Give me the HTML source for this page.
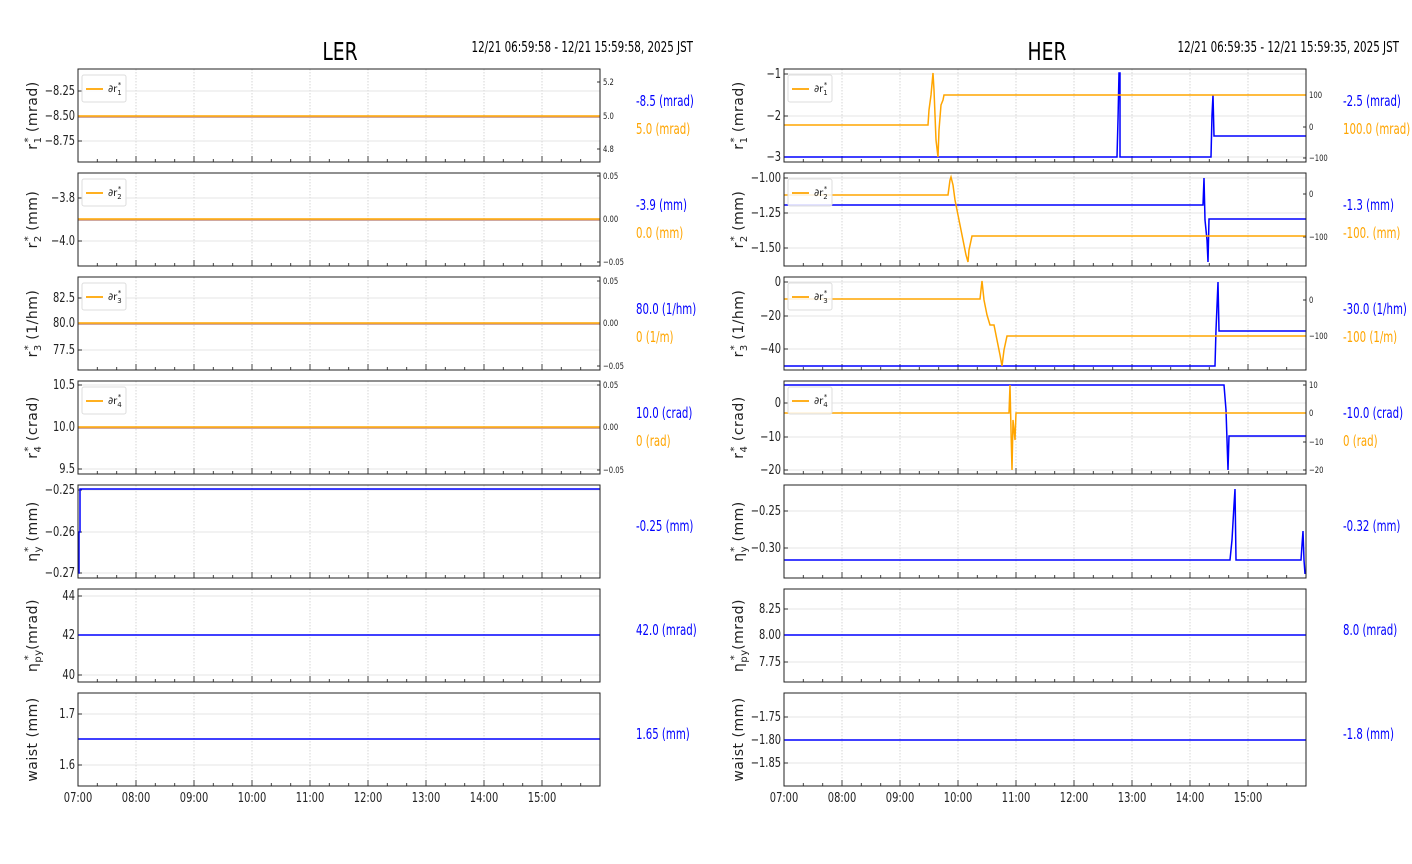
<!DOCTYPE html>
<html><head><meta charset="utf-8">
<style>
html,body{margin:0;padding:0;background:#fff;}
svg{display:block;font-family:"DejaVu Sans","Liberation Sans",sans-serif;}
</style></head><body>
<svg id="s" width="1412" height="864" xmlns="http://www.w3.org/2000/svg"></svg>
<script>
var s=document.getElementById('s'),o='';
function L(x1,y1,x2,y2,c,w,d){o+='<line x1="'+x1+'" y1="'+y1+'" x2="'+x2+'" y2="'+y2+'" stroke="'+c+'" stroke-width="'+w+'"'+(d?' stroke-dasharray="'+d+'"':'')+'/>';}
function T(x,y,t,sz,c,a,sx){sx=sx||0.76;o+='<text transform="translate('+x+','+y+') scale('+sx+',1)" font-size="'+sz+'" fill="'+(c||'#000')+'" text-anchor="'+(a||'start')+'">'+t+'</text>';}
function P(pts,c,w){o+='<polyline fill="none" stroke="'+c+'" stroke-width="'+(w||1.5)+'" points="'+pts+'"/>';}
var tops=[69,173,277,381,485,589,693],H=93,W=522;
function panel(x0,y0,yt,rt,legend,lines,ylab){
  for(var k=1;k<9;k++){var x=x0+58*k;L(x,y0,x,y0+H,'#ccc',0.8,'1.5,1.5');}
  yt.forEach(function(t){L(x0,t[0],x0+W,t[0],'#ddd',0.8);L(x0,t[0],x0+4,t[0],'#333',1);T(x0-3,t[0]+4,t[1],13,'#222','end');});
  if(rt){rt.forEach(function(t){L(x0+W-3,t[0],x0+W,t[0],'#333',1);T(x0+W+3,t[0]+3,t[1],9,'#222','start');});}
  for(var k=0;k<=27;k++){var x=x0+58*k/3;var big=k%3==0;L(x,y0+H,x,y0+H-(big?6:3),'#444',1);}
  lines.forEach(function(l){P(l[0],l[1],l[2]);});
  if(legend){o+='<rect x="'+(x0+4)+'" y="'+(y0+6)+'" width="44" height="27" rx="2" fill="#fff" fill-opacity="0.85" stroke="#ddd"/>';L(x0+8,y0+20,x0+25,y0+20,'orange',1.8);o+='<text x="'+(x0+30)+'" y="'+(y0+23)+'" font-size="10" fill="#222">∂r<tspan font-size="7" dy="3">'+legend+'</tspan><tspan font-size="7" dy="-8" dx="-4">*</tspan></text>';}
  o+='<rect x="'+x0+'" y="'+y0+'" width="'+W+'" height="'+H+'" fill="none" stroke="#222" stroke-width="1"/>';
  o+='<text transform="translate('+(x0-41)+','+(y0+H/2)+') rotate(-90)" font-size="14" letter-spacing="0.5" text-anchor="middle" fill="#222">'+ylab+'</text>';
}
function lab(sub,u){return 'r<tspan font-size="10" dy="4">'+sub+'</tspan><tspan font-size="10" dy="-10" dx="-6">*</tspan><tspan dy="6"> ('+u+')</tspan>';}
var eta='η<tspan font-size="10" dy="4">y</tspan><tspan font-size="10" dy="-10" dx="-6">*</tspan><tspan dy="6"> (mm)</tspan>';
var etap='η<tspan font-size="10" dy="4">py</tspan><tspan font-size="10" dy="-10" dx="-11">*</tspan><tspan dy="6"> (mrad)</tspan>';
var X=78,E=600;
function flat(y,c){return [X+','+y+' '+E+','+y,c];}
panel(X,69,[[91,'−8.25'],[116,'−8.50'],[141,'−8.75']],[[82,'5.2'],[116,'5.0'],[149,'4.8']],'1',[['78,117 600,117','#d0a8a0',2],flat(116,'orange')],lab('1','mrad'));
panel(X,173,[[198,'−3.8'],[241,'−4.0']],[[176,'0.05'],[219,'0.00'],[262,'−0.05']],'2',[['78,220 600,220','#d0a8a0',2],flat(219,'orange')],lab('2','mm'));
panel(X,277,[[298,'82.5'],[323,'80.0'],[350,'77.5']],[[281,'0.05'],[323,'0.00'],[366,'−0.05']],'3',[['78,324 600,324','#d0a8a0',2],flat(323,'orange')],lab('3','1/hm'));
panel(X,381,[[385,'10.5'],[427,'10.0'],[469,'9.5']],[[385,'0.05'],[427,'0.00'],[470,'−0.05']],'4',[['78,428 600,428','#d0a8a0',2],flat(427,'orange')],lab('4','crad'));
panel(X,485,[[490,'−0.25'],[532,'−0.26'],[573,'−0.27']],null,null,[['78,573 79,573 79,532 80,532 80,489 600,489','blue']],eta);
panel(X,589,[[596,'44'],[635,'42'],[675,'40']],null,null,[flat(635,'blue')],etap);
panel(X,693,[[714,'1.7'],[765,'1.6']],null,null,[flat(739,'blue')],'waist (mm)');
X=784;E=1306;
panel(X,69,[[74,'−1'],[116,'−2'],[157,'−3']],[[95,'100'],[127,'0'],[158,'−100']],'1',[
 ['784,157 1117,157 1118,120 1119,73 1120,73 1120,157 1211,157 1212,115 1213,95 1214,136 1306,136','blue'],
 ['784,125 928,125 929,110 931,95 933,73 934,90 935,115 936,140 938,157 939,130 941,105 943,100 944,95 1306,95','orange']],lab('1','mrad'));
panel(X,173,[[178,'−1.00'],[213,'−1.25'],[248,'−1.50']],[[194,'0'],[237,'−100']],'2',[
 ['784,205 1203,205 1204,178 1205,220 1207,240 1208,262 1209,219 1306,219','blue'],
 ['784,195 948,195 950,180 951,177 953,185 955,200 958,215 961,230 964,245 966,255 968,262 969,250 972,236 1306,236','orange']],lab('2','mm'));
panel(X,277,[[282,'0'],[316,'−20'],[349,'−40']],[[300,'0'],[336,'−100']],'3',[
 ['784,366 1215,366 1216,330 1218,282 1219,331 1306,331','blue'],
 ['784,299 980,299 982,281 984,300 987,315 990,325 994,325 997,340 1000,355 1002,366 1004,350 1007,336 1306,336','orange']],lab('3','1/hm'));
panel(X,381,[[403,'0'],[437,'−10'],[470,'−20']],[[385,'10'],[413,'0'],[442,'−10'],[470,'−20']],'4',[
 ['784,385 1224,385 1226,410 1228,470 1229,436 1306,436','blue'],
 ['784,413 1009,413 1010,385 1011,430 1012,470 1013,420 1015,440 1016,413 1306,413','orange']],lab('4','crad'));
panel(X,485,[[511,'−0.25'],[548,'−0.30']],null,null,[['784,560 1230,560 1232,540 1234,505 1235,489 1236,560 1301,560 1302,545 1303,531 1304,560 1305,574','blue']],eta);
panel(X,589,[[609,'8.25'],[635,'8.00'],[662,'7.75']],null,null,[['784,635 1306,635','blue']],etap);
panel(X,693,[[717,'−1.75'],[740,'−1.80'],[763,'−1.85']],null,null,[['784,740 1306,740','blue']],'waist (mm)');
var hrs=['07:00','08:00','09:00','10:00','11:00','12:00','13:00','14:00','15:00'];
hrs.forEach(function(h,k){T(78+58*k,802,h,13,'#222','middle');T(784+58*k,802,h,13,'#222','middle');});
T(340,60,'LER',25,'#000','middle',0.75);T(1047,60,'HER',25,'#000','middle',0.75);
T(693,52,'12/21 06:59:58 - 12/21 15:59:58, 2025 JST',15,'#000','end',0.69);
T(1399,52,'12/21 06:59:35 - 12/21 15:59:35, 2025 JST',15,'#000','end',0.69);
var lv=[['-8.5 (mrad)','5.0 (mrad)'],['-3.9 (mm)','0.0 (mm)'],['80.0 (1/hm)','0 (1/m)'],['10.0 (crad)','0 (rad)'],['-0.25 (mm)'],['42.0 (mrad)'],['1.65 (mm)']];
var rv=[['-2.5 (mrad)','100.0 (mrad)'],['-1.3 (mm)','-100. (mm)'],['-30.0 (1/hm)','-100 (1/m)'],['-10.0 (crad)','0 (rad)'],['-0.32 (mm)'],['8.0 (mrad)'],['-1.8 (mm)']];
for(var i=0;i<7;i++){
 var yb=i<4?tops[i]+37:tops[i]+46;
 T(636,yb,lv[i][0],15,'blue','start',0.68);if(lv[i][1])T(636,yb+28,lv[i][1],15,'orange','start',0.68);
 T(1343,yb,rv[i][0],15,'blue','start',0.68);if(rv[i][1])T(1343,yb+28,rv[i][1],15,'orange','start',0.68);
}
s.innerHTML=o;
</script>
</body></html>
